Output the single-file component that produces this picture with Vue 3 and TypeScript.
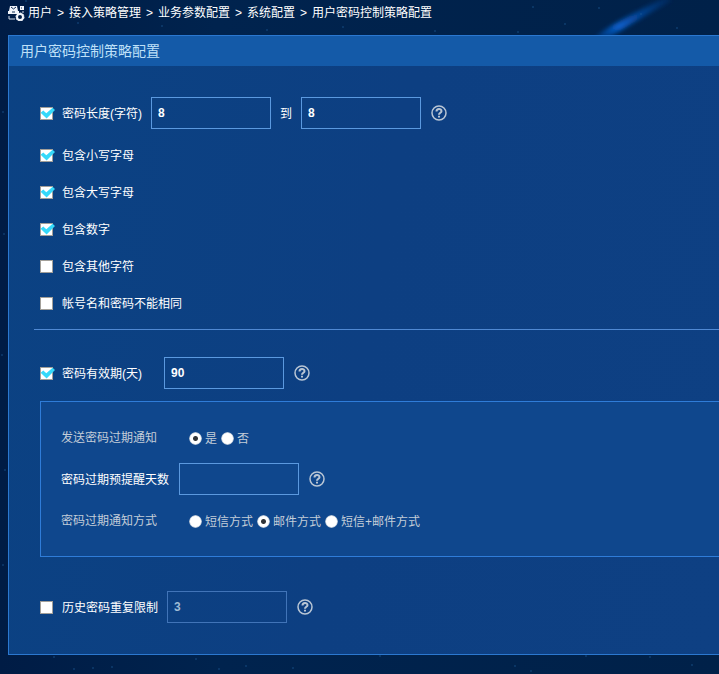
<script setup lang="ts">
import { reactive, ref } from 'vue'

interface Rule {
  id: string
  label: string
  checked: boolean
}

const crumbs = ['用户', '接入策略管理', '业务参数配置', '系统配置', '用户密码控制策略配置']

const length = reactive({ enabled: true, min: '8', max: '8' })
const rules = reactive<Rule[]>([
  { id: 'lower', label: '包含小写字母', checked: true },
  { id: 'upper', label: '包含大写字母', checked: true },
  { id: 'digit', label: '包含数字', checked: true },
  { id: 'other', label: '包含其他字符', checked: false },
  { id: 'same', label: '帐号名和密码不能相同', checked: false },
])
const validity = reactive({ enabled: true, days: '90' })
const notify = ref('yes')
const remindDays = ref('')
const method = ref('mail')
const methods = [
  { value: 'sms', label: '短信方式' },
  { value: 'mail', label: '邮件方式' },
  { value: 'both', label: '短信+邮件方式' },
]
const history = reactive({ enabled: false, count: '3' })

const stars = [
  [26, 1], [78, 23], [162, 26], [343, 27], [267, 30], [435, 31],
  [533, 7], [565, 24], [599, 8], [641, 14], [677, 28], [518, 32],
  [3, 112], [4, 234], [2, 355], [5, 470], [3, 565], [54, 657],
  [74, 669], [93, 668], [112, 667], [196, 659], [219, 669], [246, 666],
  [293, 668], [380, 656], [515, 666], [531, 671], [586, 656], [650, 657],
  [692, 665],
]
</script>

<template>
  <div class="page">
    <svg class="sky" aria-hidden="true">
      <defs>
        <linearGradient id="tail" x1="0" y1="1" x2="1" y2="0">
          <stop offset="0" stop-color="#0652b8" stop-opacity="0.3" />
          <stop offset="0.3" stop-color="#0860cc" />
          <stop offset="1" stop-color="#0a3a85" stop-opacity="0.3" />
        </linearGradient>
        <filter id="soft" x="-20%" y="-40%" width="140%" height="180%">
          <feGaussianBlur stdDeviation="2" />
        </filter>
      </defs>
      <path d="M594 38 Q612 23 666 -3 L672 0 Q634 22 610 37 Z" fill="url(#tail)" filter="url(#soft)" />
      <circle v-for="(s, i) in stars" :key="i" :cx="s[0]" :cy="s[1]" r="1" class="star" />
    </svg>

    <nav class="crumbs" aria-label="位置">
      <svg class="crumb-icon" viewBox="0 0 17 16" aria-hidden="true">
        <path d="M2 1h7l1 5H1z" fill="#f2f5fa" />
        <path d="M3 2l2.500 2L8 2" fill="none" stroke="#153259" />
        <path d="M0 6h11v3H0z" fill="#f2f5fa" />
        <path d="M4 7h3" stroke="#153259" />
        <path d="M12 1h4v4h-4z" fill="#f2f5fa" />
        <path d="M13 3h1" stroke="#153259" />
        <path d="M1 11v3h6M15 6v2" fill="none" stroke="#d5dde8" />
        <circle cx="12" cy="12" r="4" fill="none" stroke="#f2f5fa" stroke-dasharray="2 1" />
        <circle cx="12" cy="12" r="3" fill="none" stroke="#f2f5fa" stroke-width="2" />
      </svg>
      <template v-for="(c, i) in crumbs" :key="c">
        <span v-if="i" class="sep">&gt;</span>
        <a href="#" class="crumb">{{ c }}</a>
      </template>
    </nav>

    <main class="panel">
      <h1 class="title">用户密码控制策略配置</h1>
      <form class="body" @submit.prevent>
        <div class="row">
          <label class="check"><input v-model="length.enabled" type="checkbox" /><span>密码长度(字符)</span></label>
          <input v-model="length.min" class="text" type="text" aria-label="最小长度" />
          <span class="to">到</span>
          <input v-model="length.max" class="text" type="text" aria-label="最大长度" />
          <button class="help" type="button" aria-label="帮助">
            <svg viewBox="0 0 16 16"><circle cx="8" cy="8" r="7" /><path d="M5.500 6.500C5.500 3.200 10.500 3.200 10.500 6.200C10.500 7.800 8 7.800 8 9.800M8 10.800V12.600" /></svg>
          </button>
        </div>

        <div class="rules">
          <label v-for="r in rules" :key="r.id" class="check">
            <input v-model="r.checked" type="checkbox" /><span>{{ r.label }}</span>
          </label>
        </div>

        <hr class="rule" />

        <div class="row">
          <label class="check wide"><input v-model="validity.enabled" type="checkbox" /><span>密码有效期(天)</span></label>
          <input v-model="validity.days" class="text" type="text" aria-label="密码有效期" />
          <button class="help" type="button" aria-label="帮助">
            <svg viewBox="0 0 16 16"><circle cx="8" cy="8" r="7" /><path d="M5.500 6.500C5.500 3.200 10.500 3.200 10.500 6.200C10.500 7.800 8 7.800 8 9.800M8 10.800V12.600" /></svg>
          </button>
        </div>

        <section class="box">
          <div class="line" role="radiogroup" aria-labelledby="notify-name">
            <span id="notify-name" class="name">发送密码过期通知</span>
            <label class="radio"><input v-model="notify" type="radio" name="notify" value="yes" /><span>是</span></label>
            <label class="radio"><input v-model="notify" type="radio" name="notify" value="no" /><span>否</span></label>
          </div>
          <div class="row">
            <label class="remind" for="remind">密码过期预提醒天数</label>
            <input id="remind" v-model="remindDays" class="text" type="text" />
            <button class="help" type="button" aria-label="帮助">
              <svg viewBox="0 0 16 16"><circle cx="8" cy="8" r="7" /><path d="M5.500 6.500C5.500 3.200 10.500 3.200 10.500 6.200C10.500 7.800 8 7.800 8 9.800M8 10.800V12.600" /></svg>
            </button>
          </div>
          <div class="line" role="radiogroup" aria-labelledby="method-name">
            <span id="method-name" class="name">密码过期通知方式</span>
            <label v-for="m in methods" :key="m.value" class="radio">
              <input v-model="method" type="radio" name="method" :value="m.value" /><span>{{ m.label }}</span>
            </label>
          </div>
        </section>

        <div class="row">
          <label class="check"><input v-model="history.enabled" type="checkbox" /><span>历史密码重复限制</span></label>
          <input v-model="history.count" class="text" type="text" :disabled="!history.enabled" aria-label="历史密码重复次数" />
          <button class="help" type="button" aria-label="帮助">
            <svg viewBox="0 0 16 16"><circle cx="8" cy="8" r="7" /><path d="M5.500 6.500C5.500 3.200 10.500 3.200 10.500 6.200C10.500 7.800 8 7.800 8 9.800M8 10.800V12.600" /></svg>
          </button>
        </div>
      </form>
    </main>
  </div>
</template>

<style>
body {
  background: #00214a;
}
</style>

<style scoped>
.page {
  position: relative;
  box-sizing: border-box;
  min-height: 100vh;
  padding: 0 0 19px 8px;
  overflow: hidden;
  background: linear-gradient(90deg, #001c45, #00234e 30%, #002149);
  color: #fff;
  font: 12px/16px "Liberation Sans", "Noto Sans CJK SC", sans-serif;
}
.sky {
  position: absolute;
  inset: 0;
  width: 100%;
  height: 100%;
}
.star {
  fill: #1c5a94;
  opacity: 0.5;
}
.crumbs {
  position: relative;
  display: flex;
  align-items: center;
  height: 26px;
  padding-bottom: 9px;
}
.crumb-icon {
  width: 17px;
  height: 16px;
  margin-right: 3px;
}
.crumb {
  color: #fff;
  text-decoration: none;
}
.sep {
  width: 17px;
  text-align: center;
}
.panel {
  position: relative;
  border: 1px solid #2b78d0;
  border-right: 0;
  background: linear-gradient(100deg, #0b4283, #0d3f82 50%, #0e4083);
}
.title {
  margin: 0;
  padding: 0 11px;
  font-size: 14px;
  line-height: 30px;
  font-weight: normal;
  color: #bfe0f8;
  background: #145aa8;
}
.body {
  padding: 31px 0 31px 31px;
}
.row {
  display: flex;
  align-items: center;
}
.check {
  display: flex;
  align-items: center;
  gap: 9px;
  margin-right: 9px;
}
.check span,
.radio span,
.remind,
.to {
  padding-top: 2px;
}
.wide {
  margin-right: 22px;
}
.check input {
  appearance: none;
  box-sizing: border-box;
  width: 13px;
  height: 13px;
  margin: 0;
  border: 1px solid #a29f99;
  background: #fff;
}
.check input:checked {
  position: relative;
}
.check input:checked::after {
  content: "";
  position: absolute;
  inset: -1px -3px -1px -1px;
  background: #35d9fa;
  clip-path: polygon(4% 48%, 22% 30%, 42% 52%, 84% 10%, 100% 26%, 44% 92%);
}
.text {
  box-sizing: border-box;
  width: 120px;
  height: 32px;
  padding: 0 6px;
  border: 1px solid #5b99df;
  border-radius: 0;
  background: transparent;
  color: #fff;
  font: bold 12px/16px "Liberation Sans", "Noto Sans CJK SC", sans-serif;
}
.text:disabled {
  border-color: #4174b8;
  color: #9fbcd5;
}
.to {
  margin: 0 9px;
}
.help {
  width: 16px;
  height: 16px;
  margin-left: 10px;
  padding: 0;
  border: 0;
  background: none;
}
.help svg {
  display: block;
  fill: none;
  stroke: #b9c6d5;
  stroke-width: 1.500;
}
.help path {
  stroke-width: 2;
}
.rules {
  display: grid;
  justify-items: start;
  gap: 19px;
  margin-top: 17px;
}
.rule {
  height: 1px;
  margin: 17px 0 27px -6px;
  border: 0;
  background: #5089d3;
}
.box {
  margin: 12px 0 34px;
  padding: 27px 0 26px 20px;
  border: 1px solid #2f7cd8;
  border-right: 0;
  background: #0f478d;
}
.line {
  display: flex;
  align-items: center;
  color: #c3cdd8;
}
.line + .row {
  margin: 16px 0 17px;
}
.name {
  width: 128px;
}
.remind {
  margin-right: 10px;
}
.radio {
  display: flex;
  align-items: center;
  gap: 3px;
  margin-right: 4px;
}
.radio input {
  appearance: none;
  width: 13px;
  height: 13px;
  margin: 0;
  border-radius: 50%;
  background: radial-gradient(circle, #fff 5px, #b8c6d6 6px, transparent 7px);
}
.radio input:checked {
  background: radial-gradient(circle, #303438 2px, #fff 3px, #fff 5px, #b8c6d6 6px, transparent 7px);
}
</style>
